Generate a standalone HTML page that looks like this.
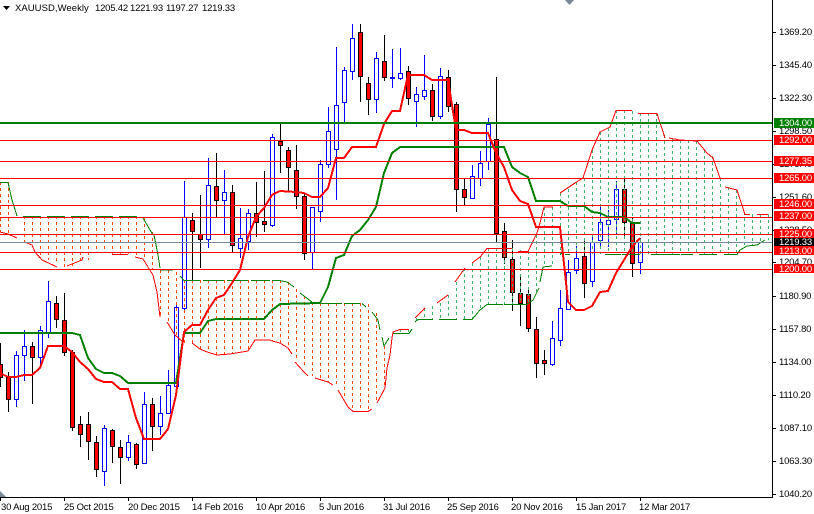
<!DOCTYPE html>
<html><head><meta charset="utf-8">
<style>
html,body{margin:0;padding:0;background:#fff;width:814px;height:514px;overflow:hidden}
svg{display:block}
text{font-family:"Liberation Sans",sans-serif;font-size:9.5px;letter-spacing:-.2px;fill:#000}
.w{fill:#fff}
.n{letter-spacing:.05px}
</style></head><body>
<svg width="814" height="514" viewBox="0 0 814 514" xmlns="http://www.w3.org/2000/svg">
<rect width="814" height="514" fill="#fff"/>
<g shape-rendering="crispEdges" fill="none">
<path stroke="#00f" d="M16.5 351V407M24.5 330V381M40.5 326V367M48.5 281V338M104.5 425V486M128.5 435V461M144.5 392V463M160.5 396V435M168.5 370V413M176.5 305V386M184.5 181V310M208.5 158V248M224.5 170V234M240.5 208V258M248.5 209V250M272.5 134V227M312.5 207V270M320.5 160V222M328.5 107V168M336.5 47V200M344.5 67V123M352.5 24V80M376.5 52V113M392.5 49V88M400.5 48V80M416.5 87V127M424.5 55V100M440.5 68V119M472.5 165V199M480.5 151V186M488.5 118V170M552.5 321V366M560.5 290V346M568.5 260V309M576.5 246V274M592.5 235V287M600.5 207V249M608.5 210V247M616.5 181V234M640.5 238V274"/>
<path stroke="#00f" fill="#fff" d="M14.5 355.5h4v44h-4zM22.5 346.5h4v9h-4zM38.5 330.5h4v27h-4zM46.5 301.5h4v31h-4zM102.5 428.5h4v43h-4zM126.5 442.5h4v15h-4zM142.5 404.5h4v59h-4zM158.5 413.5h4v13h-4zM166.5 385.5h4v28h-4zM174.5 307.5h4v79h-4zM182.5 217.5h4v91h-4zM206.5 185.5h4v54h-4zM222.5 192.5h4v8h-4zM238.5 238.5h4v10h-4zM246.5 213.5h4v28h-4zM270.5 137.5h4v88h-4zM310.5 207.5h4v45h-4zM318.5 164.5h4v47h-4zM326.5 131.5h4v33h-4zM334.5 105.5h4v44h-4zM342.5 70.5h4v32h-4zM350.5 38.5h4v33h-4zM374.5 58.5h4v41h-4zM390.5 77.5h4v1h-4zM398.5 73.5h4v5h-4zM414.5 94.5h4v7h-4zM422.5 90.5h4v6h-4zM438.5 76.5h4v40h-4zM470.5 176.5h4v22h-4zM478.5 163.5h4v15h-4zM486.5 124.5h4v37h-4zM550.5 338.5h4v26h-4zM558.5 308.5h4v32h-4zM566.5 272.5h4v37h-4zM574.5 258.5h4v12h-4zM590.5 242.5h4v39h-4zM598.5 222.5h4v18h-4zM606.5 220.5h4v4h-4zM614.5 189.5h4v30h-4zM638.5 242.5h4v20h-4z"/>
<path stroke="#000" d="M0.5 343V387M8.5 372V412M32.5 342V404M56.5 296V328M64.5 293V356M72.5 350V431M80.5 416V447M88.5 412V460M96.5 436V477M112.5 429V463M120.5 440V484M136.5 443V469M152.5 398V451M192.5 213V280M200.5 195V268M216.5 153V217M232.5 185V252M256.5 182V237M264.5 171V232M280.5 123V173M288.5 147V192M296.5 145V209M304.5 193V260M360.5 24V102M368.5 77V115M384.5 35V81M408.5 66V105M432.5 84V121M448.5 70V112M456.5 102V212M464.5 179V205M496.5 77V243M504.5 223V264M512.5 240V311M520.5 274V326M528.5 289V332M536.5 317V378M544.5 350V375M584.5 241V298M624.5 179V238M632.5 218V277"/>
<path stroke="#000" fill="#f00" d="M-1.5 364.5h4v13h-4zM6.5 377.5h4v22h-4zM30.5 346.5h4v11h-4zM54.5 303.5h4v16h-4zM62.5 320.5h4v32h-4zM70.5 352.5h4v75h-4zM78.5 424.5h4v10h-4zM86.5 424.5h4v17h-4zM94.5 442.5h4v27h-4zM110.5 430.5h4v16h-4zM118.5 447.5h4v10h-4zM134.5 444.5h4v20h-4zM150.5 404.5h4v22h-4zM190.5 220.5h4v11h-4zM198.5 234.5h4v5h-4zM214.5 186.5h4v14h-4zM230.5 192.5h4v53h-4zM254.5 213.5h4v9h-4zM262.5 221.5h4v3h-4zM278.5 141.5h4v4h-4zM286.5 150.5h4v17h-4zM294.5 170.5h4v26h-4zM302.5 196.5h4v57h-4zM358.5 32.5h4v44h-4zM366.5 83.5h4v16h-4zM382.5 61.5h4v16h-4zM406.5 71.5h4v27h-4zM430.5 90.5h4v26h-4zM446.5 77.5h4v29h-4zM454.5 104.5h4v85h-4zM462.5 189.5h4v8h-4zM494.5 139.5h4v94h-4zM502.5 231.5h4v26h-4zM510.5 259.5h4v33h-4zM518.5 293.5h4v10h-4zM526.5 294.5h4v34h-4zM534.5 329.5h4v34h-4zM542.5 360.5h4v3h-4zM582.5 256.5h4v27h-4zM622.5 189.5h4v33h-4zM630.5 223.5h4v40h-4z"/>
<!-- cloud hatch -->
<path stroke="#ff4500" stroke-dasharray="3 3" d="M0.5 182V232M8.5 182V234M24.5 216V242M32.5 216V245M40.5 216V258M48.5 216V260M56.5 216V264M64.5 216V267M72.5 216V266M80.5 216V263M88.5 216V260M96.5 216V253M104.5 216V253M112.5 216V254M120.5 216V254M128.5 216V254M136.5 216V257M144.5 218V258M152.5 232V270M160.5 270V317M168.5 270V322M176.5 272V336M184.5 280V343M192.5 280V344M200.5 280V349M208.5 280V352M216.5 280V355M224.5 280V355M232.5 280V354M240.5 280V352M248.5 280V350M256.5 280V340M264.5 280V340M272.5 280V341M280.5 280V343M288.5 282V348M296.5 289V358M304.5 296V368M312.5 302V376M320.5 303V378M328.5 303V382M336.5 303V386M344.5 303V398M352.5 303V410M360.5 303V411M368.5 304V411M376.5 313V402M384.5 346V388"/>
<path stroke="#3cb371" stroke-dasharray="3 3" d="M400.5 329V333M408.5 329V333M416.5 318V322M424.5 308V319M432.5 306V319M440.5 303V319M448.5 295V319M456.5 282V319M464.5 268V319M472.5 263V319M480.5 257V310M488.5 248V304M496.5 248V304M504.5 248V304M512.5 248V304M520.5 250V304M528.5 251V304M536.5 235V292M544.5 207V267M552.5 207V266M560.5 193V255M568.5 189V254M576.5 182V254M584.5 178V254M592.5 150V254M600.5 132V254M608.5 128V254M616.5 110V254M624.5 110V254M632.5 111V254M640.5 113V254M648.5 113V254M656.5 113V254M664.5 135V254M672.5 139V254M680.5 140V254M688.5 140V254M696.5 141V254M704.5 150V254M712.5 156V254M720.5 178V254M728.5 187V254M736.5 190V253M744.5 212V248M752.5 214V245M760.5 214V243M768.5 214V240"/>
<!-- senkou B (green thin) -->
<path stroke="#008000" d="M0 182.500H8L12 200L17 216M23 216.500H41M47 216.500H65M71 216.500H89M95 216.500H113M119 216.500H137M143 218L153 235M154 235L158 255L160 268M160 270L173 270M180 276L184 280.500H200M203 280.500H224M227 280.500H248M251 280.500H270M272 280.500H280L287 282L294 287M300 293L312 302M320 303.500H342M344 303.500H360M362 303.500L366 307M372 312L378 320L380 330M382 337L384 346L389 338M393 333.500H409L412 329M415 322L418 319.500H433M439 319.500H457M463 319.500H472L480 310L487 304.500H503M504 304.500H527L533 300L539 288M540 282L543 267L552 266M560 255L562 253M565 254.500H570M605 254.500H621M622 254.500H640M651 254.500H680M681 254.500H693M699 254.500H717M724 254.500H737L740 250L747 246L757 245L765 240"/>
<!-- senkou A (red thin) -->
<path stroke="#f00" d="M0 232L8 234L17 238M25 242L32 245L35 252L40 258M38 255L42 260L57 267M67 266L82 260L83 257M98 252M112 254.500H128M135 257L143 259L153 275L157 292L160 317M167 322L175 335L183 342M192 343L200 349L207 352L217 355L230 354L248 351L255 340H270L272 341L280 343L288 348L292 354M295 362L304 372L308 376M315 378L328 382L333 385M338 390L348 407L353 411.500H368L372 409M377 403L385 388L387 368L390 355L392 338L393 332L400 329.500H409M415 318L425 308M437 303L448 295M455 282L465 268M472 263L480 257L487 248.500H512M518 251.500H528L537 233L540 223L544 207L553 207M560 193L575 183L583 178L592 150L600 132L610 127L616 110.500H632M638 113.500H657L665 138M669 138L680 140L697 141L707 153L713 158L720 178M725 187L737 190L745 214.500H750M757 214.500H768"/>
</g>
<!-- kijun / tenkan -->
<g fill="none" stroke-width="2" shape-rendering="crispEdges">
<polyline stroke="#008000" points="0,333 72,333 80,335 88,358 96,369 104,373 112,373 120,376 128,383 176,383 184,333 200,333 208,321 216,319 264,319 272,310 280,304 320,303 328,287 336,258 344,255 352,236 360,230 368,220 376,207 384,173 392,153 400,147 504,147 512,167 520,173 528,177 536,201 560,201 568,206 584,206 592,212 600,213 608,217 624,217 632,223 640,223"/>
<polyline stroke="#f00" points="0,373 8,377 16,377 24,375 32,375 40,368 48,346 64,346 72,352 80,362 88,369 96,379 104,382 112,382 120,389 128,389 136,418 144,439 160,439 168,429 176,395 184,332 192,325 200,325 208,310 216,298 224,295 232,283 240,270 248,237 256,217 264,208 272,195 280,191 296,192 304,193 312,197 320,197 328,188 336,158 344,158 352,147 376,147 384,124 392,111 400,111 408,75 424,75 432,80 448,80 456,130 464,130 472,133 488,133 496,153 504,167 512,190 520,201 528,204 536,227 560,227 565,273 568,302 576,310 584,310 592,306 600,292 608,291 616,273 624,260 632,247 640,238"/>
</g>
<!-- horizontal lines -->
<g shape-rendering="crispEdges">
<rect x="0" y="122" width="772" height="2" fill="#008000"/>
<rect x="0" y="140" width="772" height="1" fill="#f00"/>
<rect x="0" y="161" width="772" height="1" fill="#f00"/>
<rect x="0" y="178" width="772" height="1" fill="#f00"/>
<rect x="0" y="205" width="772" height="1" fill="#f00"/>
<rect x="0" y="217" width="772" height="1" fill="#f00"/>
<rect x="0" y="234" width="772" height="1" fill="#f00"/>
<rect x="0" y="242" width="772" height="1" fill="#778899"/>
<rect x="0" y="252" width="772" height="1" fill="#f00"/>
<rect x="0" y="269" width="772" height="1" fill="#f00"/>
<!-- axes -->
<rect x="772" y="0" width="1" height="498" fill="#000"/>
<rect x="0" y="497" width="773" height="1" fill="#000"/>
<path stroke="#000" d="M773 32.500h3M773 65.500h3M773 98.500h3M773 131.500h3M773 164.500h3M773 197.500h3M773 230.500h3M773 262.500h3M773 296.500h3M773 329.500h3M773 362.500h3M773 395.500h3M773 428.500h3M773 461.500h3M773 494.500h3M0.500 497v4M64.500 497v4M128.500 497v4M192.500 497v4M256.500 497v4M320.500 497v4M384.500 497v4M448.500 497v4M512.500 497v4M576.500 497v4M640.500 497v4"/>
</g>
<polygon points="0,491 0,497 6,497" fill="#778899"/>
<polygon points="565,0 574,0 569.500,5" fill="#778899"/>
<polygon points="3,6 10,6 6.500,10" fill="#000"/>
<text class="n" x="15" y="11">XAUUSD,Weekly</text>
<text x="95" y="11">1205.42</text>
<text x="130" y="11">1221.93</text>
<text x="166" y="11">1197.27</text>
<text x="202" y="11">1219.33</text>
<!-- price axis -->
<g>
<text x="779" y="35">1369.20</text>
<text x="779" y="68">1345.40</text>
<text x="779" y="101">1322.30</text>
<text x="779" y="134">1298.50</text>
<text x="779" y="167">1275.40</text>
<text x="779" y="200">1251.60</text>
<text x="779" y="233">1228.50</text>
<text x="779" y="265">1204.70</text>
<text x="779" y="299">1180.90</text>
<text x="779" y="332">1157.80</text>
<text x="779" y="365">1134.00</text>
<text x="779" y="398">1110.20</text>
<text x="779" y="431">1087.10</text>
<text x="779" y="464">1063.30</text>
<text x="779" y="497">1040.20</text>
</g>
<g shape-rendering="crispEdges">
<rect x="774" y="118" width="40" height="10" fill="#008000"/>
<rect x="774" y="135" width="40" height="10" fill="#f00"/>
<rect x="774" y="156" width="40" height="10" fill="#f00"/>
<rect x="774" y="173" width="40" height="10" fill="#f00"/>
<rect x="774" y="199" width="40" height="10" fill="#f00"/>
<rect x="774" y="211" width="40" height="10" fill="#f00"/>
<rect x="774" y="229" width="40" height="9" fill="#f00"/>
<rect x="774" y="238" width="40" height="8" fill="#000"/>
<rect x="774" y="246" width="40" height="9" fill="#f00"/>
<rect x="774" y="264" width="40" height="9" fill="#f00"/>
</g>
<text class="w" x="779" y="126">1304.00</text>
<text class="w" x="779" y="143">1292.00</text>
<text class="w" x="779" y="164">1277.35</text>
<text class="w" x="779" y="181">1265.00</text>
<text class="w" x="779" y="207">1246.00</text>
<text class="w" x="779" y="219">1237.00</text>
<text class="w" x="779" y="237">1225.00</text>
<text class="w" x="779" y="245">1219.33</text>
<text class="w" x="779" y="254">1213.00</text>
<text class="w" x="779" y="272">1200.00</text>
<!-- time axis -->
<text x="1" y="510">30 Aug 2015</text>
<text x="64" y="510">25 Oct 2015</text>
<text x="128" y="510">20 Dec 2015</text>
<text x="192" y="510">14 Feb 2016</text>
<text x="256" y="510">10 Apr 2016</text>
<text x="319" y="510">5 Jun 2016</text>
<text x="383" y="510">31 Jul 2016</text>
<text x="447" y="510">25 Sep 2016</text>
<text x="511" y="510">20 Nov 2016</text>
<text x="576" y="510">15 Jan 2017</text>
<text x="639" y="510">12 Mar 2017</text>
</svg>
</body></html>
